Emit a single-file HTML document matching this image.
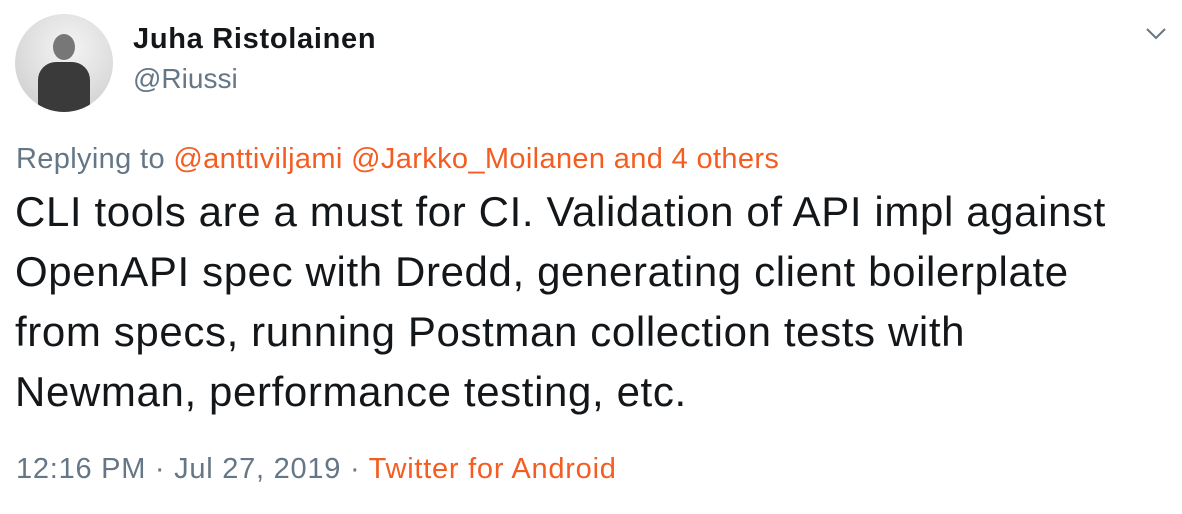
<!DOCTYPE html>
<html><head><style>
body{margin:0;width:1182px;height:514px;background:#fff;font-family:"Liberation Sans",sans-serif;position:relative;overflow:hidden}
.a{position:absolute;white-space:nowrap}
.o{color:#f45d22}
</style></head><body>
<div class="a" style="left:15px;top:14px;width:98px;height:98px;border-radius:50%;background:radial-gradient(circle at 55% 35%,#f4f4f4 0,#e4e4e4 40%,#c8c8c8 100%);overflow:hidden">
<div style="position:absolute;left:38px;top:20px;width:22px;height:26px;border-radius:50%;background:#777"></div>
<div style="position:absolute;left:23px;top:48px;width:52px;height:55px;border-radius:18px 18px 0 0;background:#3a3a3a"></div>
</div>
<div class="a" style="left:133px;top:23px;font-size:29px;font-weight:bold;color:#14171a;letter-spacing:0.7px">Juha Ristolainen</div>
<div class="a" style="left:133px;top:63px;font-size:28px;color:#657786">@Riussi</div>
<svg class="a" style="left:1145px;top:27px" width="22" height="14" viewBox="0 0 22 14"><path d="M2 2l9 9 9-9" fill="none" stroke="#657786" stroke-width="2"/></svg>
<div class="a" style="left:16px;top:143px;font-size:29px;color:#657786;letter-spacing:0.35px">Replying to <span class="o">@anttiviljami @Jarkko_Moilanen and 4 others</span></div>
<div class="a" style="left:15px;top:182px;font-size:42px;line-height:60px;color:#14171a;letter-spacing:0.62px">CLI tools are a must for CI. Validation of API impl against<br>OpenAPI spec with Dredd, generating client boilerplate<br>from specs, running Postman collection tests with<br>Newman, performance testing, etc.</div>
<div class="a" style="left:16px;top:453px;font-size:29px;color:#657786;letter-spacing:0.75px">12:16 PM · Jul 27, 2019 · <span class="o">Twitter for Android</span></div>
</body></html>
